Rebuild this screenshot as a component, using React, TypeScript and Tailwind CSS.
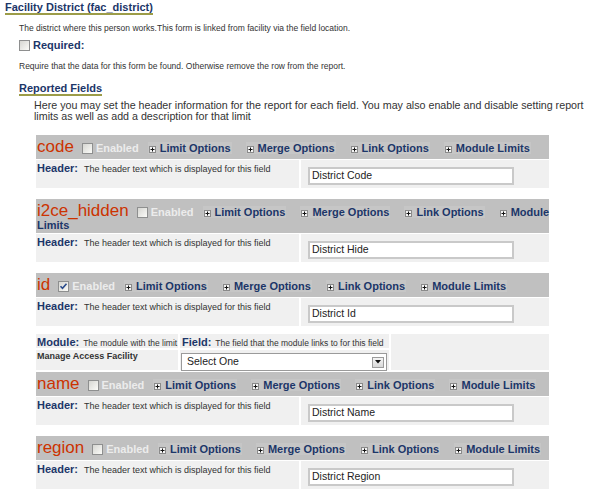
import React from 'react';

type Field = {
  name: string;
  enabled: boolean;
  value: string;
  wrap?: boolean;
  module?: boolean;
};

const fields: Field[] = [
  { name: 'code', enabled: false, value: 'District Code' },
  { name: 'i2ce_hidden', enabled: false, value: 'District Hide', wrap: true },
  { name: 'id', enabled: true, value: 'District Id', module: true },
  { name: 'name', enabled: false, value: 'District Name' },
  { name: 'region', enabled: false, value: 'District Region' },
];

const links = ['Limit Options', 'Merge Options', 'Link Options', 'Module Limits'];

// small expand icon in front of each option link
const PlusBox = () => (
  <svg width="7" height="7" viewBox="0 0 7 7" className="inline-block align-[-1px]">
    <rect x="0.5" y="0.5" width="6" height="6" fill="#f4f4f4" stroke="#8a8a8a" />
    <path d="M1.5 3.5H5.5M3.5 1.5V5.5" stroke="#111" strokeWidth="1" />
  </svg>
);

const CheckBox = ({ checked, className = '' }: { checked?: boolean; className?: string }) => (
  <span
    className={`relative inline-block w-[11px] h-[11px] border border-[#8e8f8f] bg-linear-to-br from-[#d6d6d2] to-[#fbfbf8] ${className}`}
  >
    {checked && (
      <svg width="9" height="9" viewBox="0 0 9 9" className="absolute left-0 top-0">
        <path d="M1.5 4.2L3.5 6.3L7.5 1.8" fill="none" stroke="#2b4c8c" strokeWidth="1.6" />
      </svg>
    )}
  </span>
);

const FieldHeader = ({ f }: { f: Field }) => (
  <div className="bg-[#c0c0c0] pl-[1px] pt-[2px] pb-[3px] whitespace-nowrap text-[11px] leading-[10px]">
    <span className="text-[17px] leading-[19px] text-[#cc3300]">{f.name}</span>
    <CheckBox checked={f.enabled} className="ml-[8px] align-[-2px]" />
    <span className="ml-[3px] font-bold text-[#ececec]">Enabled</span>
    {links.map((l, i) => {
      const margin = i === 0 ? 'ml-[9px]' : 'ml-[14px]';
      if (f.wrap && l === 'Module Limits') {
        return (
          <React.Fragment key={l}>
            <span className={`${margin} px-[1px] font-bold text-[#1c3669]`}>
              <PlusBox />
              <span className="ml-[4px]">Module</span>
            </span>
            <br />
            <span className="font-bold text-[#1c3669]">Limits</span>
          </React.Fragment>
        );
      }
      return (
        <span key={l} className={`${margin} bg-[#c6c6c6] px-[1px] font-bold text-[#1c3669]`}>
          <PlusBox />
          <span className="ml-[4px]">{l}</span>
        </span>
      );
    })}
  </div>
);

const FieldBody = ({ f }: { f: Field }) => (
  <div className="mt-[1px] flex gap-[2px] h-[28px]">
    <div className="w-[263px] bg-[#f0f0f0] pl-[1px] pt-[1px] leading-[12px] whitespace-nowrap">
      <span className="font-bold text-[11px] text-[#1c3669]">Header:</span>
      <span className="ml-[6px] text-[9px] text-[#333]">The header text which is displayed for this field</span>
    </div>
    <div className="flex-1 bg-[#f0f0f0] pl-[7px] pt-[7px]">
      <div className="w-[206px] h-[18px] border-2 border-[#c9c9c9] bg-white pl-[2px] flex items-center text-[10.5px] text-[#222]">
        {f.value}
      </div>
    </div>
  </div>
);

const ModuleLimit = () => (
  <div className="mt-[8px] grid grid-cols-[142px_209px_158px] grid-rows-[14px_20px] gap-[2px]">
    <div className="bg-[#f0f0f0] pl-[1px] pt-[1px] leading-[12px] whitespace-nowrap overflow-hidden">
      <span className="font-bold text-[11px] text-[#1c3669]">Module:</span>
      <span className="ml-[4px] text-[8.5px] text-[#333]">The module with the limit</span>
    </div>
    <div className="bg-[#f0f0f0] pl-[2px] pt-[1px] leading-[12px] whitespace-nowrap overflow-hidden">
      <span className="font-bold text-[11px] text-[#1c3669]">Field:</span>
      <span className="ml-[4px] text-[8.5px] text-[#333]">The field that the module links to for this field</span>
    </div>
    <div className="row-span-2 bg-[#f0f0f0]"></div>
    <div className="bg-[#f0f0f0] pl-[1px] pt-[1px] leading-[11px] text-[9px] font-bold text-[#333] whitespace-nowrap">
      Manage Access Facility
    </div>
    <div className="bg-[#f0f0f0] pl-[1px] pt-[3px]">
      <div className="w-[206px] h-[18px] border border-[#9a9a9a] bg-white pl-[5px] pr-[2px] flex items-center justify-between text-[10.5px] text-[#222]">
        <span>Select One</span>
        <span className="w-[12px] h-[11px] border border-[#9c9c9c] bg-linear-to-b from-[#f6f6f6] to-[#d8d8d8] flex items-center justify-center">
          <svg width="6" height="4" viewBox="0 0 6 4">
            <path d="M0 0H6L3 3.5Z" fill="#111" />
          </svg>
        </span>
      </div>
    </div>
  </div>
);

export default function App() {
  return (
    <div className="w-[600px] h-[497px] bg-white overflow-hidden pl-[5px] pt-[1px] font-['Liberation_Sans',Arial,sans-serif] text-[#222]">
      <div className="w-fit border-b-2 border-[#9c9c48] text-[11px] leading-[12px] font-bold text-[#1c3669]">
        Facility District (fac_district)
      </div>

      <div className="ml-[14px]">
        <p className="mt-[8px] text-[8.5px] leading-[10px] text-[#333]">
          The district where this person works.This form is linked from facility via the field location.
        </p>

        <div className="mt-[6px] flex items-center gap-[3px] h-[13px]">
          <CheckBox />
          <span className="text-[11px] leading-[13px] font-bold text-[#1c3669]">Required:</span>
        </div>

        <p className="mt-[9px] text-[8.5px] leading-[10px] text-[#333]">
          Require that the data for this form be found. Otherwise remove the row from the report.
        </p>

        <div className="mt-[11px] w-fit border-b-2 border-[#9c9c48] text-[11px] leading-[12px] font-bold text-[#1c3669]">
          Reported Fields
        </div>

        <p className="mt-[4px] ml-[15px] text-[10.7px] leading-[11px] text-[#333] whitespace-nowrap">
          Here you may set the header information for the report for each field. You may also enable and disable setting report
          <br />
          limits as well as add a description for that limit
        </p>
      </div>

      <div className="ml-[31px] w-[513px] mt-[13px]">
        {fields.map((f, i) => {
          const prev = fields[i - 1];
          const top = i === 0 ? '' : prev.module ? 'mt-[2px]' : 'mt-[11px]';
          return (
            <div key={f.name} className={top}>
              <FieldHeader f={f} />
              <FieldBody f={f} />
              {f.module && <ModuleLimit />}
            </div>
          );
        })}
      </div>
    </div>
  );
}
